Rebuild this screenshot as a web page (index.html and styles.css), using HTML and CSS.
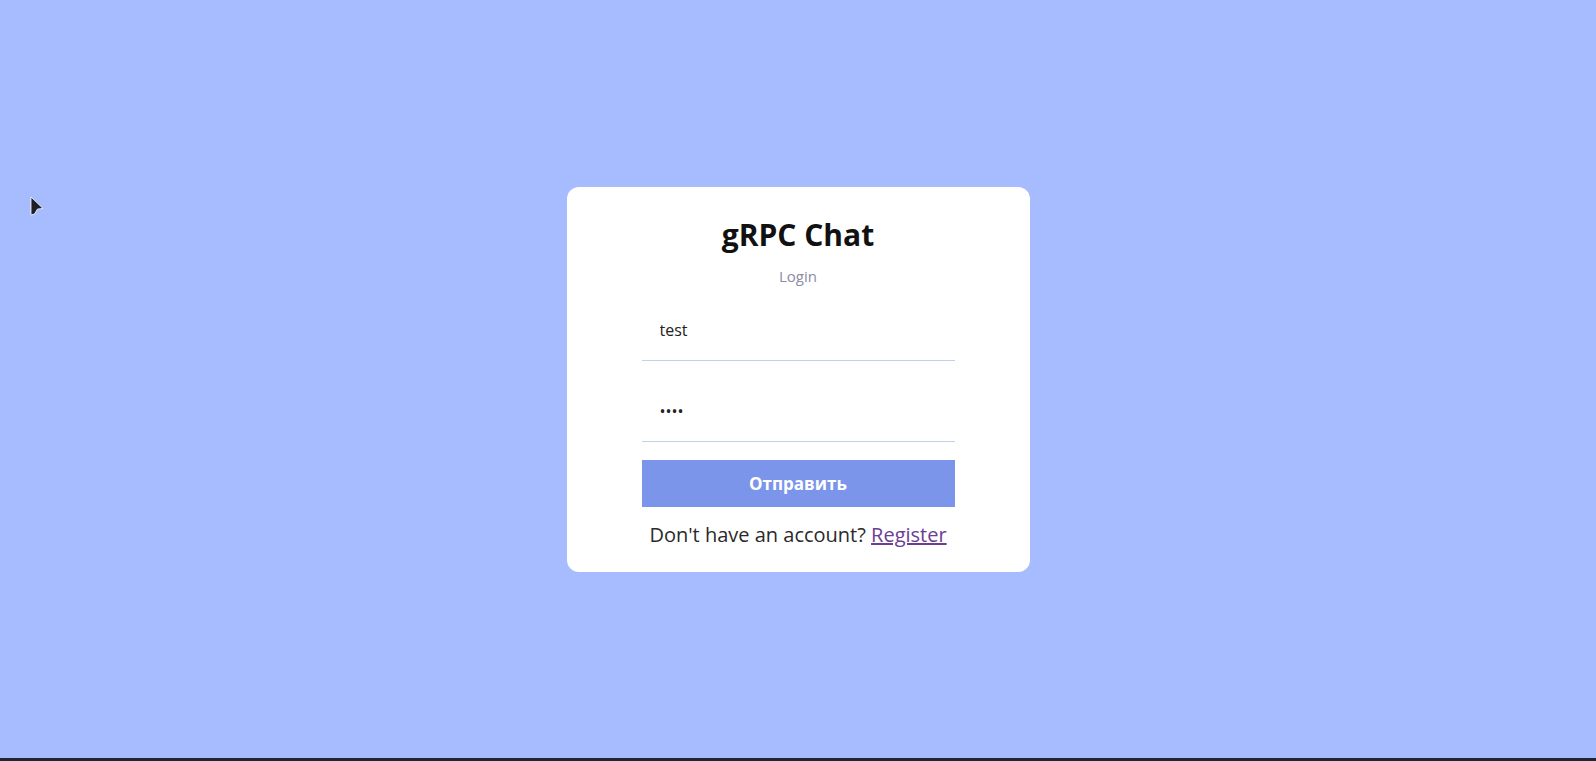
FILE: index.html
```html
<!DOCTYPE html>
<html lang="ru">
<head>
<meta charset="utf-8">
<title>gRPC Chat</title>
<link rel="stylesheet" href="styles.css">
</head>
<body>
<div class="screen">
  <div class="card">
    <h1 class="title">gRPC Chat</h1>
    <div class="subtitle">Login</div>
    <form class="form">
      <input class="field" type="text" value="test">
      <input class="field field-pass" type="password" value="test">
      <button class="submit" type="button">Отправить</button>
    </form>
    <p class="footer">Don't have an account? <a class="link" href="#">Register</a></p>
  </div>
</div>
<div class="taskbar"></div>
<svg class="cursor" width="16" height="22" viewBox="0 0 16 22">
  <polygon points="1,1 13,12.5 7.5,13 4.5,18 1,19" fill="#1c1f24" stroke="#ffffff" stroke-width="0.8"/>
</svg>
</body>
</html>
```
FILE: styles.css
```css
html, body {
  margin: 0;
  padding: 0;
  height: 100%;
}
body {
  background: #a7bcfe;
  font-family: "Open Sans", "Liberation Sans", sans-serif;
  overflow: hidden;
  display: flex;
  flex-direction: column;
}
.screen {
  flex: 1;
  display: flex;
  align-items: center;
  justify-content: center;
}
.taskbar {
  height: 3px;
  background: #1d2636;
}
.card {
  box-sizing: border-box;
  width: 463px;
  background: #ffffff;
  border-radius: 12px;
  padding: 30px 75px 24px;
  display: flex;
  flex-direction: column;
  align-items: center;
}
.title {
  margin: 0;
  font-size: 30px;
  line-height: 36px;
  font-weight: 700;
  color: #111111;
}
.subtitle {
  margin-top: 13px;
  font-size: 15px;
  line-height: 20px;
  color: #8b8ba4;
}
.form {
  margin-top: 21px;
  width: 313px;
  display: flex;
  flex-direction: column;
}
.field {
  box-sizing: border-box;
  width: 100%;
  border: none;
  border-bottom: 1px solid #c2cff0;
  outline: none;
  padding: 12px 18px 19px;
  font-family: "Open Sans", "Liberation Sans", sans-serif;
  font-size: 16px;
  color: #222222;
  background: #ffffff;
}
.field-pass {
  margin-top: 27px;
}
.submit {
  margin-top: 18px;
  height: 47px;
  border: none;
  background: #7b95ea;
  color: #ffffff;
  font-family: "Open Sans", "Liberation Sans", sans-serif;
  font-size: 17px;
  font-weight: 700;
}
.footer {
  margin: 14px 0 0;
  font-size: 20px;
  color: #2a2a2a;
}
.link {
  color: #6b3e94;
}
.cursor {
  position: absolute;
  left: 30px;
  top: 196px;
}
```
